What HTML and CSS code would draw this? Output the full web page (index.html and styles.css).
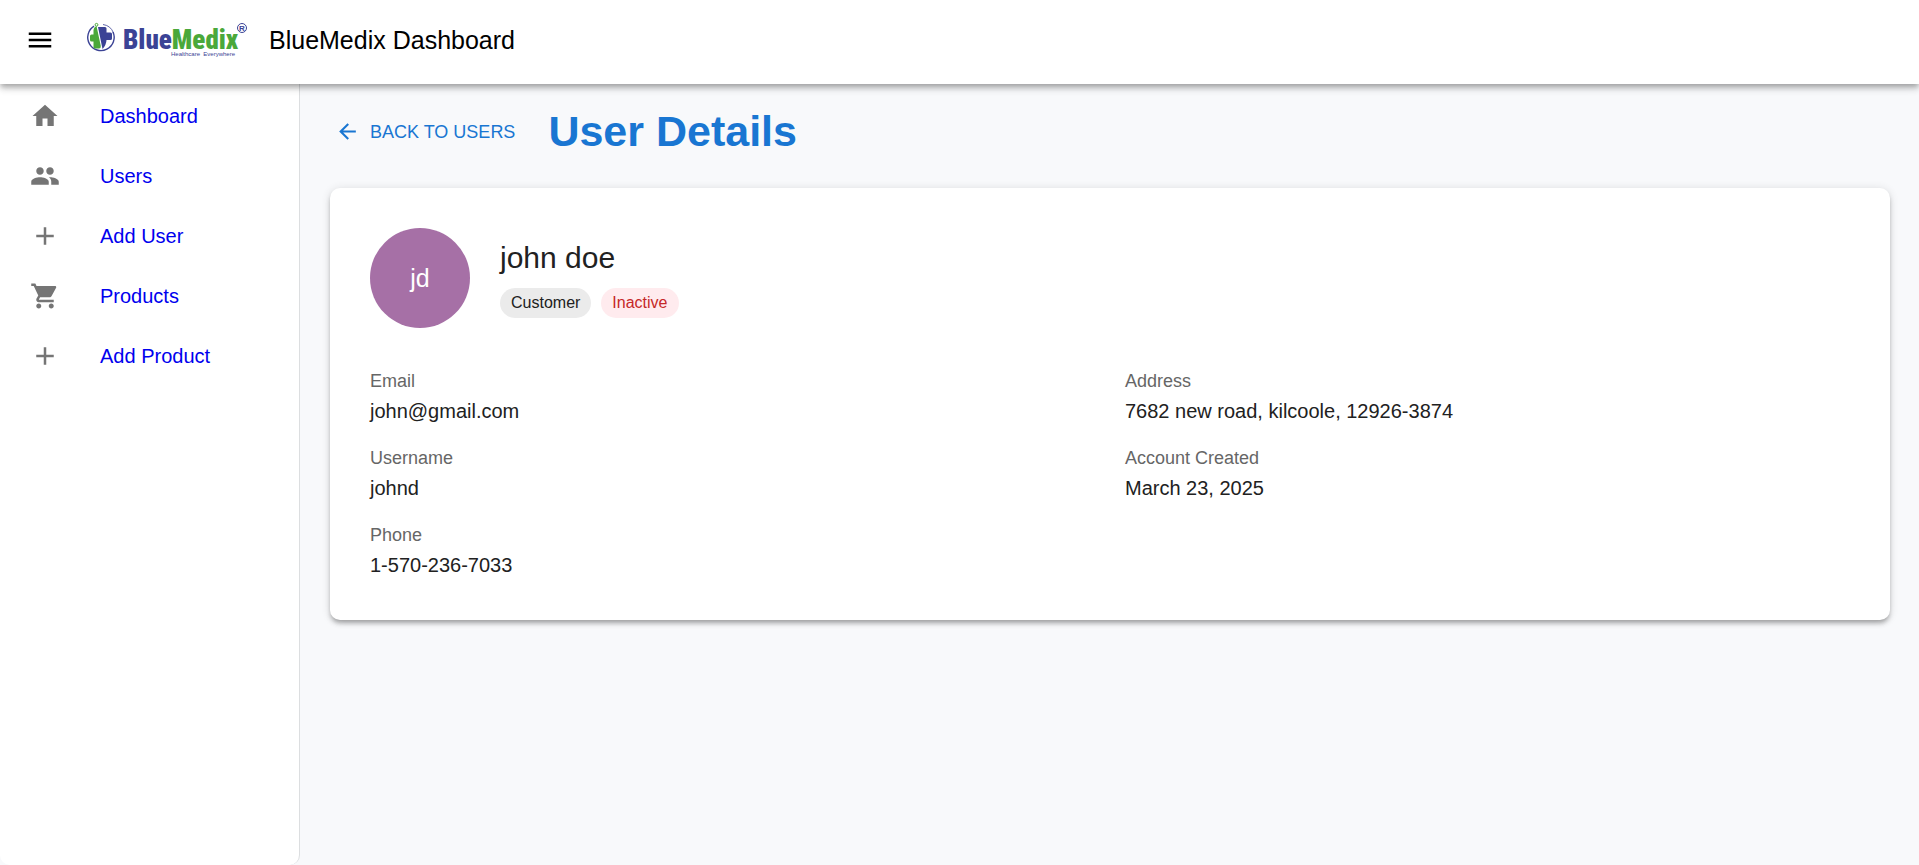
FILE: index.html
```html
<!DOCTYPE html>
<html lang="en">
<head>
<meta charset="utf-8">
<meta name="viewport" content="width=device-width, initial-scale=1">
<title>BlueMedix Dashboard</title>
<link rel="stylesheet" href="styles.css">
</head>
<body>
<header class="appbar">
  <button class="menu-button" type="button" aria-label="Open menu">
    <svg class="icon" viewBox="0 0 24 24"><path d="M3 18h18v-2H3zm0-5h18v-2H3zm0-7v2h18V6z"/></svg>
  </button>
  <svg class="logo" viewBox="0 0 172 50" role="img" aria-label="BlueMedix, Healthcare Everywhere">
    <g fill="none" stroke="#3b4395">
      <path d="M13 11.200A13.200 13.200 0 1 0 32 17" stroke-width="1.400"/>
      <path d="M22 9.500A13.200 13.200 0 0 1 32.500 18" stroke-width="0.800"/>
    </g>
    <path fill="#4aa83a" d="M15.500 11L19.800 31Q20 33.500 18 33.500H14Q12.500 33.500 12.500 32V26.500H10.500Q9 26.500 9 25V21Q9 19.500 10.500 19.500H12.500V15Q12.500 12.500 15.500 11Z"/>
    <path fill="#3b4395" d="M17 12H24Q25.500 12 25.500 13.500V17.500H29.500Q31 17.500 31 19V23.500Q31 25 29.500 25H25.500Q25.300 30 21.500 34Z"/>
    <circle cx="15.500" cy="9.800" r="1.400" fill="none" stroke="#4aa83a"/>
    <text class="logo-name" x="42" y="34"><tspan fill="#3b4395">Blue</tspan><tspan fill="#4aa83a">Medix</tspan></text>
    <text class="logo-tag" x="90" y="41">Healthcare&#160; Everywhere</text>
    <circle cx="161" cy="13" r="4.500" fill="none" stroke="#3b4395"/>
    <text class="logo-mark" x="161" y="16" text-anchor="middle">R</text>
  </svg>
  <div class="appbar-title">BlueMedix Dashboard</div>
</header>
<div class="layout">
  <nav class="sidebar" aria-label="Main">
    <a class="nav-link" href="#"><svg class="icon" viewBox="0 0 24 24"><path d="M10 20v-6h4v6h5v-8h3L12 3 2 12h3v8z"/></svg>Dashboard</a>
    <a class="nav-link" href="#"><svg class="icon" viewBox="0 0 24 24"><path d="M16 11c1.660 0 2.990-1.340 2.990-3S17.660 5 16 5s-3 1.340-3 3 1.340 3 3 3m-8 0c1.660 0 2.990-1.340 2.990-3S9.660 5 8 5 5 6.340 5 8s1.340 3 3 3m0 2c-2.330 0-7 1.170-7 3.500V19h14v-2.500c0-2.330-4.670-3.500-7-3.500m8 0c-.29 0-.62.020-.97.050 1.160.84 1.970 1.970 1.970 3.450V19h6v-2.500c0-2.330-4.670-3.500-7-3.500"/></svg>Users</a>
    <a class="nav-link" href="#"><svg class="icon" viewBox="0 0 24 24"><path d="M19 13h-6v6h-2v-6H5v-2h6V5h2v6h6z"/></svg>Add User</a>
    <a class="nav-link" href="#"><svg class="icon" viewBox="0 0 24 24"><path d="M7 18c-1.100 0-1.990.9-1.990 2S5.900 22 7 22s2-.9 2-2-.9-2-2-2M1 2v2h2l3.600 7.590-1.350 2.450c-.16.280-.25.610-.25.960 0 1.100.9 2 2 2h12v-2H7.420c-.14 0-.25-.11-.25-.25l.03-.12.900-1.630h7.450c.75 0 1.410-.41 1.750-1.030l3.580-6.490c.08-.14.12-.31.12-.48 0-.55-.45-1-1-1H5.210l-.94-2zm16 16c-1.100 0-1.990.9-1.990 2s.89 2 1.990 2 2-.9 2-2-.9-2-2-2"/></svg>Products</a>
    <a class="nav-link" href="#"><svg class="icon" viewBox="0 0 24 24"><path d="M19 13h-6v6h-2v-6H5v-2h6V5h2v6h6z"/></svg>Add Product</a>
  </nav>
  <main class="content">
    <div class="page-head">
      <button class="back-button" type="button">
        <svg class="back-icon" viewBox="0 0 24 24"><path d="M20 11H7.830l5.590-5.590L12 4l-8 8 8 8 1.410-1.410L7.830 13H20z"/></svg>BACK TO USERS
      </button>
      <h1 class="page-title">User Details</h1>
    </div>
    <section class="card">
      <div class="profile">
        <div class="avatar">jd</div>
        <div class="identity">
          <h2 class="name">john doe</h2>
          <div class="chips">
            <span class="chip">Customer</span>
            <span class="chip chip-inactive">Inactive</span>
          </div>
        </div>
      </div>
      <div class="details">
        <dl class="fields">
          <div class="field"><dt>Email</dt><dd>john@gmail.com</dd></div>
          <div class="field"><dt>Username</dt><dd>johnd</dd></div>
          <div class="field"><dt>Phone</dt><dd>1-570-236-7033</dd></div>
        </dl>
        <dl class="fields">
          <div class="field"><dt>Address</dt><dd>7682 new road, kilcoole, 12926-3874</dd></div>
          <div class="field"><dt>Account Created</dt><dd>March 23, 2025</dd></div>
        </dl>
      </div>
    </section>
  </main>
</div>
</body>
</html>
```

FILE: styles.css
```css
* {
  box-sizing: border-box;
}

body {
  margin: 0;
  min-height: 100vh;
  display: flex;
  flex-direction: column;
  background: #f8f9fb;
  color: #212121;
  font: 20px/30px "Liberation Sans", Arial, sans-serif;
}

button {
  border: 0;
  background: none;
  font: inherit;
  cursor: pointer;
}

h1,
h2,
dl,
dd {
  margin: 0;
}

.icon {
  display: block;
  width: 30px;
  height: 30px;
  fill: currentColor;
}

.appbar {
  position: relative;
  z-index: 1;
  display: flex;
  align-items: center;
  padding: 15px 10px 19px;
  background: #fff;
  color: #000;
  box-shadow: 0 3px 5px -1px rgba(0, 0, 0, 0.2), 0 5px 6px rgba(0, 0, 0, 0.14), 0 1px 12px rgba(0, 0, 0, 0.12);
}

.menu-button {
  padding: 10px 15px;
  color: #000;
}

.logo {
  flex: none;
  width: 172px;
  height: 50px;
  margin: 0 16px 0 11px;
}

.logo-name {
  font: 900 27px "Roboto Condensed", "Liberation Sans Narrow", sans-serif;
}

.logo-tag {
  font: 6px "Liberation Sans", Arial, sans-serif;
  fill: #3b4395;
}

.logo-mark {
  font: bold 8px "Liberation Sans", Arial, sans-serif;
  fill: #3b4395;
}

.appbar-title {
  font-size: 25px;
}

.layout {
  flex: 1;
  display: flex;
}

.sidebar {
  flex: none;
  width: 300px;
  padding-top: 2px;
  background: #fff;
  border-right: 1px solid #dcdee0;
  border-radius: 0 0 10px 10px;
}

.nav-link {
  display: flex;
  align-items: center;
  gap: 40px;
  height: 60px;
  padding-left: 30px;
  color: #0000ee;
  text-decoration: none;
}

.nav-link .icon {
  color: #757575;
}

.content {
  flex: 1;
  padding: 20px 29px 30px 30px;
}

.page-head {
  display: flex;
  align-items: center;
  gap: 20px;
  margin-bottom: 30px;
}

.back-button {
  display: flex;
  align-items: center;
  gap: 10px;
  padding: 11px 13px 10px 5px;
  color: #1976d2;
  font-size: 18px;
}

.back-icon {
  width: 25px;
  height: 25px;
  fill: currentColor;
}

.page-title {
  color: #1976d2;
  font-size: 43px;
  line-height: 54px;
}

.card {
  padding: 40px;
  background: #fff;
  border-radius: 10px;
  box-shadow: 0 4px 4px -2px rgba(0, 0, 0, 0.2), 0 4px 5px rgba(0, 0, 0, 0.14), 0 1px 10px rgba(0, 0, 0, 0.12);
}

.profile {
  display: flex;
  align-items: center;
  gap: 30px;
  margin-bottom: 40px;
}

.avatar {
  display: grid;
  place-items: center;
  width: 100px;
  height: 100px;
  border-radius: 50%;
  background: #a670a6;
  color: #fff;
  font-size: 25px;
}

.name {
  margin-bottom: 10px;
  font-size: 30px;
  font-weight: 400;
  line-height: 40px;
}

.chips {
  display: flex;
  gap: 10px;
}

.chip {
  padding: 0 11px;
  border-radius: 15px;
  background: #ebebeb;
  font-size: 16px;
}

.chip-inactive {
  background: #ffebee;
  color: #c62828;
}

.details {
  display: grid;
  grid-template-columns: 1fr 1fr;
  gap: 30px;
}

.fields {
  display: flex;
  flex-direction: column;
  gap: 19px;
}

.field dt {
  margin-bottom: 2px;
  color: #666;
  font-size: 18px;
  line-height: 26px;
}
```
